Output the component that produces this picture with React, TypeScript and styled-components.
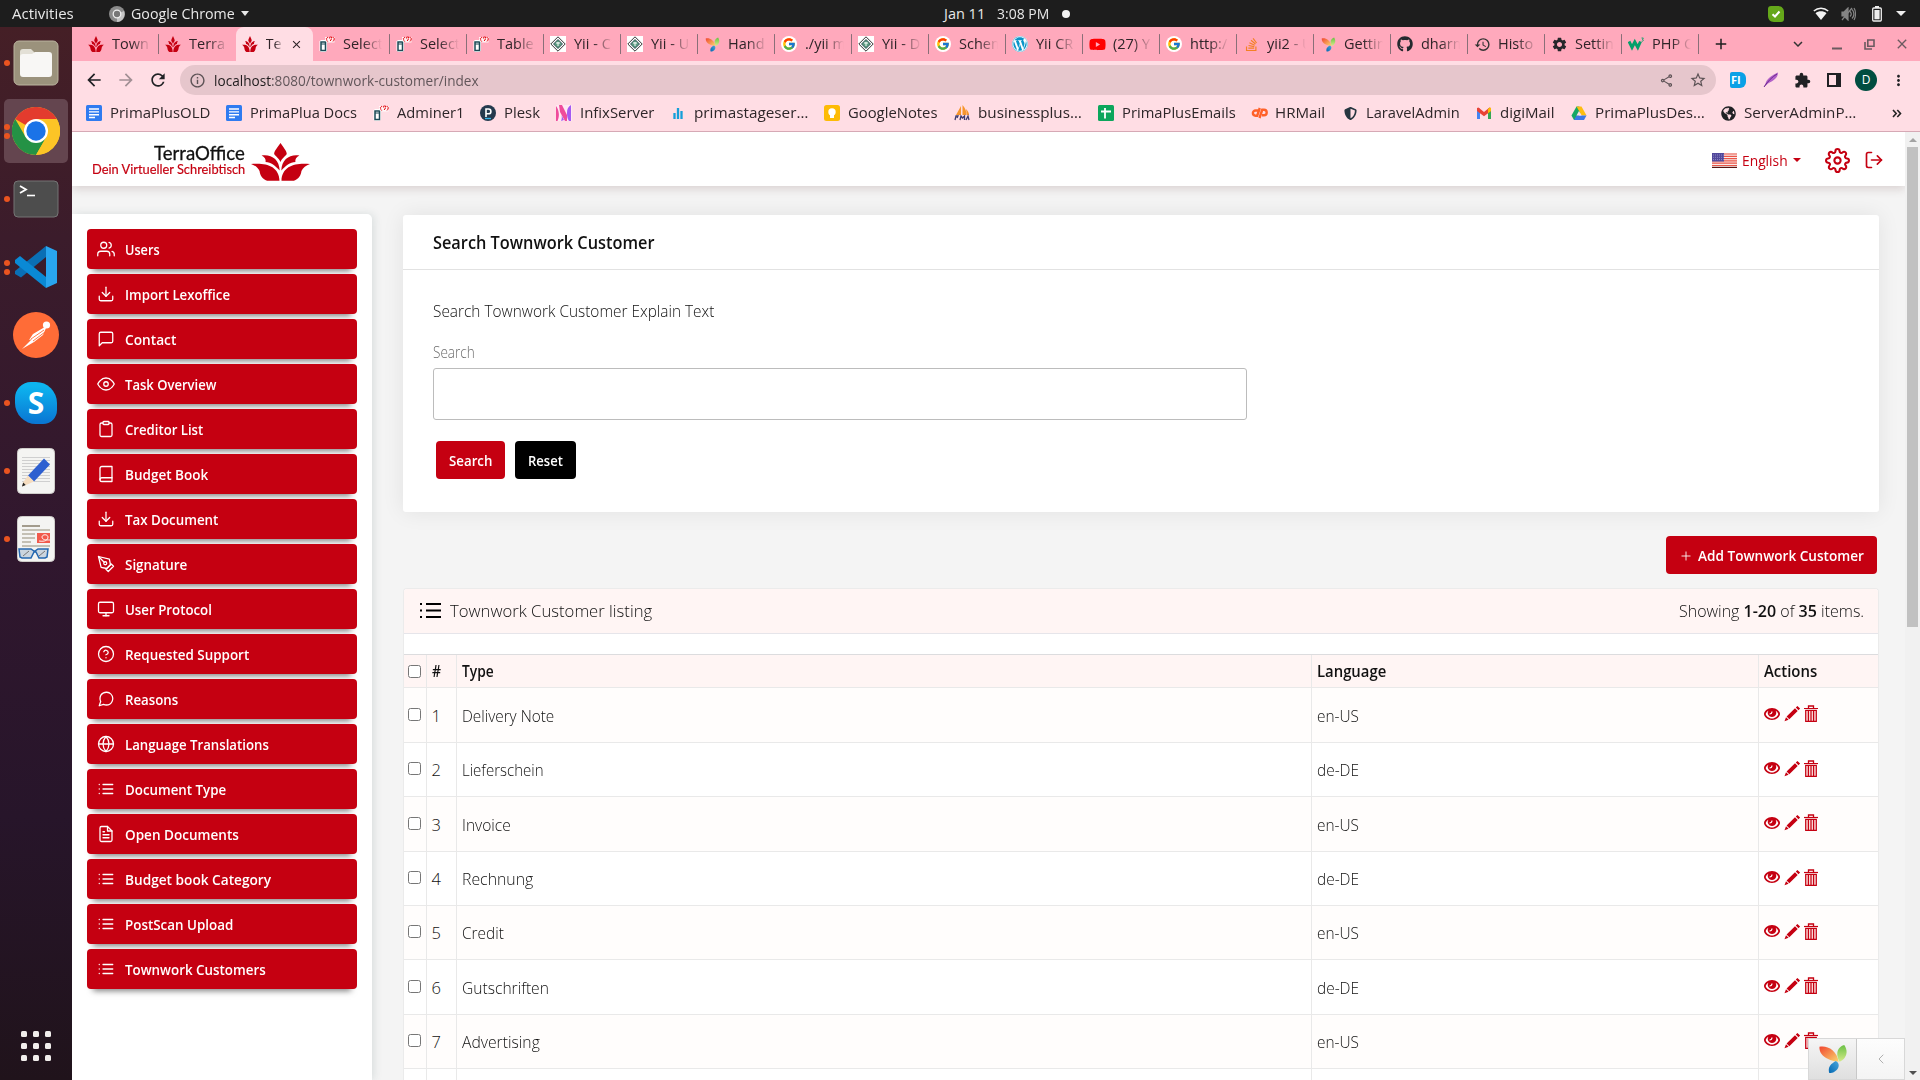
import React, { useLayoutEffect, useRef, useState } from "react";
import styled, { createGlobalStyle, css } from "styled-components";
import {
  FiUsers, FiDownload, FiMessageSquare, FiEye, FiClipboard, FiBook, FiPenTool, FiMonitor,
  FiHelpCircle, FiMessageCircle, FiGlobe, FiList, FiFileText, FiSettings, FiLogOut, FiPlus, FiChevronLeft,
} from "react-icons/fi";
import {
  MdArrowBack, MdArrowForward, MdRefresh, MdInfoOutline, MdOutlineShare, MdStarBorder, MdExtension,
  MdMoreVert, MdHistory, MdSettings, MdClose, MdAdd, MdExpandMore,
} from "react-icons/md";
import { FcGoogle } from "react-icons/fc";
import { FaYoutube, FaWordpress, FaGithub, FaStackOverflow, FaShieldAlt, FaGlobeAmericas } from "react-icons/fa";

const RED = "#c50011";

const GlobalStyle = createGlobalStyle`
  * { box-sizing: border-box; }
  html, body { margin: 0; padding: 0; overflow: hidden; }
  svg { display: block; flex: none; }
`;

const Desktop = styled.div`
  width: 1920px;
  height: 1080px;
  display: flex;
  flex-direction: column;
  overflow: hidden;
  font-family: "Open Sans", "Noto Sans", sans-serif;
  color: #111;
`;

/* ---------- text that is condensed to a given advance width ---------- */

const FitBox = styled.span`
  display: inline-block;
  white-space: pre;
  flex: none;
`;
const FitInner = styled.span`
  display: inline-block;
  transform-origin: 0 50%;
`;

function Fit({ w, children }: { w: number; children: React.ReactNode }) {
  const ref = useRef<HTMLSpanElement>(null);
  const [scale, setScale] = useState(1);
  useLayoutEffect(() => {
    const natural = ref.current?.offsetWidth ?? w;
    if (natural) setScale(w / natural);
  }, [w]);
  return (
    <FitBox style={{ width: w }}>
      <FitInner ref={ref} style={{ transform: `scaleX(${scale})` }}>{children}</FitInner>
    </FitBox>
  );
}

/* ---------- system bar ---------- */

const SystemBar = styled.header`
  height: 27px;
  flex: none;
  display: grid;
  grid-template-columns: 932px 1fr 164px;
  align-items: center;
  background: #1d1d1d;
  color: #e8e8e8;
  font-size: 14.5px;
  line-height: 26px;
`;
const BarLeft = styled.div`
  display: flex;
  align-items: center;
  padding-left: 12px;
`;
const AppMenu = styled.div`
  display: flex;
  align-items: center;
  gap: 6px;
  margin-left: 35px;
`;
const BarCenter = styled.div`
  display: flex;
  align-items: center;
  gap: 12px;
  padding-left: 12px;
`;
const NoticeDot = styled.i`
  width: 8px;
  height: 8px;
  border-radius: 50%;
  background: #f2f2f2;
  margin-left: 1px;
`;
const BarRight = styled.div`
  display: flex;
  align-items: center;
  padding-left: 12px;
`;
const Gap = styled.i<{ $w: number }>`
  width: ${(p) => p.$w}px;
  flex: none;
`;
const Triangle = styled.i<{ $s: number; $h?: number; $c: string; $up?: boolean }>`
  width: 0;
  height: 0;
  border-left: ${(p) => p.$s}px solid transparent;
  border-right: ${(p) => p.$s}px solid transparent;
  ${(p) => p.$up
    ? css`border-bottom: ${p.$h ?? p.$s}px solid ${p.$c};`
    : css`border-top: ${p.$h ?? p.$s}px solid ${p.$c};`}
`;

/* ---------- dock ---------- */

const Body = styled.div`
  flex: 1;
  display: flex;
  min-height: 0;
`;
const Dock = styled.nav`
  width: 72px;
  flex: none;
  display: flex;
  flex-direction: column;
  padding-top: 2px;
  background: linear-gradient(180deg, #451f26 0%, #3b1c2b 20%, #30172e 50%, #27152a 75%, #20131b 100%);
`;
const DockItem = styled.div`
  height: 68px;
  display: grid;
  grid-template-columns: 4px 64px;
  align-items: center;
`;
const DockMarks = styled.div`
  display: flex;
  flex-direction: column;
  gap: 3px;
  width: 6px;
  margin-left: 4px;
  z-index: 1;
`;
const Mark = styled.i`
  width: 6px;
  height: 6px;
  border-radius: 50%;
  background: #ea5420;
`;
const DockTile = styled.div<{ $active?: boolean }>`
  width: 64px;
  height: 64px;
  border-radius: 5px;
  display: flex;
  align-items: center;
  justify-content: center;
  background: ${(p) => (p.$active ? "#64454f" : "transparent")};
`;
const AppGrid = styled.div`
  margin: auto auto 19px;
  display: grid;
  grid-template-columns: repeat(3, 6px);
  gap: 6px;
`;
const GridDot = styled.i`
  width: 6px;
  height: 6px;
  border-radius: 1.5px;
  background: #f1eeec;
`;

const FilesIcon = () => (
  <svg width="46" height="46" viewBox="0 0 46 46">
    <rect x="1" y="1" width="44" height="44" rx="5" fill="#9b927c" stroke="#bbb49f" />
    <path d="M7 12a3 3 0 0 1 3-3h8l4 4-1 6H7z" fill="#e3e0d6" />
    <path d="M7 17a3 3 0 0 1 3-3h9l3-2h14a3 3 0 0 1 3 3v19a3 3 0 0 1-3 3H10a3 3 0 0 1-3-3z" fill="#f8f7f5" />
  </svg>
);
const ChromeIcon = ({ size = 48 }: { size?: number }) => (
  <svg width={size} height={size} viewBox="0 0 48 48">
    <circle cx="24" cy="24" r="24" fill="#fcc426" />
    <path d="M24 24 3.2 12A24 24 0 0 1 44.8 12z" fill="#e33b2e" />
    <path d="M3.2 12A24 24 0 0 0 24 48l10.4-18L13.6 30z" fill="#249245" />
    <path d="M24 12H44.8A24 24 0 0 1 24 48L34.4 30z" fill="#fcc426" />
    <circle cx="24" cy="24" r="12" fill="#fff" />
    <circle cx="24" cy="24" r="9.7" fill="#1a73e8" />
  </svg>
);
const TerminalIcon = () => (
  <svg width="46" height="38" viewBox="0 0 46 38">
    <rect x="1" y="1" width="44" height="36" rx="4" fill="#4d4d4d" stroke="#757575" />
    <path d="M7 6l6 3.5L7 13" fill="none" stroke="#fff" strokeWidth="1.8" />
    <path d="M14 15.5h8" stroke="#fff" strokeWidth="1.6" />
  </svg>
);
const CodeIcon = () => (
  <svg width="42" height="42" viewBox="0 0 42 42">
    <path d="M31 0v11L6 31.5 0 28v-3z" fill="#0a6fb5" />
    <path d="M5 10 0 14v3l31 25V31z" fill="#0a89d5" />
    <path d="M31 0 42 5v32l-11 5z" fill="#29a6f0" />
  </svg>
);
const PostmanIcon = () => (
  <svg width="46" height="46" viewBox="0 0 46 46">
    <circle cx="23" cy="23" r="23" fill="#ff6c37" />
    <circle cx="33.5" cy="13" r="3.6" fill="#fff" />
    <path d="M31 15.500 20 22l-4 6 3-1-10 10 12-7 9-7 3-7z" fill="#fff" />
    <path d="M18 27l13-9M20 29l12-9" stroke="#ff6c37" strokeWidth="0.9" />
  </svg>
);
const SkypeGlyph = styled.div`
  width: 42px;
  height: 42px;
  border-radius: 16px 21px 14px 21px;
  background: linear-gradient(180deg, #0db4ef 10%, #0a78d4 95%);
  color: #fff;
  font: 700 30px/41px "Open Sans", sans-serif;
  text-align: center;
`;
const EditorIcon = () => (
  <svg width="38" height="46" viewBox="0 0 38 46">
    <rect x="0.5" y="0.5" width="37" height="45" rx="4" fill="#f4f4f2" stroke="#cfcdca" />
    <path d="M5 9.500h28M5 12.500h28M5 15.500h28M5 18.500h28M5 21.500h28M5 24.500h28M5 27.500h28M5 30.500h28M5 33.500h28" stroke="#cfcfcf" />
    <path d="M27 10.500l6 6-16 17-6-6z" fill="#2d5fd0" />
    <path d="M11 27.500l6 6-9 4-3 1 1-4z" fill="#f5dcbf" />
    <path d="M5 38.500l1.200-4 2.500 2.500z" fill="#222" />
  </svg>
);
const ViewerIcon = () => (
  <svg width="38" height="46" viewBox="0 0 38 46">
    <rect x="0.5" y="0.5" width="37" height="45" rx="4" fill="#f4f4f2" stroke="#cfcdca" />
    <path d="M5 10h18" stroke="#a39c8d" strokeWidth="2" />
    <path d="M5 14h28M5 18h13M5 22h13M5 26h9M5 30h28" stroke="#c4c0b4" strokeWidth="2" />
    <rect x="20" y="17" width="13" height="10" fill="#f15a4c" />
    <path d="M22 25c6 1 9-1 9-4s-6-3-6 0 4 3 8 3" fill="none" stroke="#fff" strokeWidth="0.9" />
    <path d="M2 33h12l3 2h1l3-2h10l-1 8-2 1h-6l-3-6h-2l-3 6H5l-2-1z" fill="#cbd5df" stroke="#2467b0" strokeWidth="1.500" />
    <path d="M6 40l6-5M22 40l6-5" stroke="#777" />
  </svg>
);

/* ---------- browser ---------- */

const Browser = styled.div`
  flex: 1;
  min-width: 0;
  display: flex;
  flex-direction: column;
`;
const TabStrip = styled.div`
  height: 34px;
  flex: none;
  display: flex;
  background: #ffa9bc;
  padding-left: 9.5px;
  font-size: 14.5px;
  color: #2f2428;
`;
const Tab = styled.div<{ $active?: boolean; $line?: boolean }>`
  width: 77px;
  flex: none;
  display: flex;
  align-items: center;
  padding-left: 6.5px;
  gap: ${(p) => (p.$active ? 7.500 : 8)}px;
  border-radius: 8px 8px 0 0;
  background: ${(p) => (p.$active
    ? "#ffdde4"
    : p.$line ? "linear-gradient(#8a6f78, #8a6f78) right 0 top 7px / 1px 20px no-repeat" : "none")};
`;
const TabLabel = styled.span<{ $w: number }>`
  width: ${(p) => p.$w}px;
  flex: none;
  overflow: hidden;
  white-space: pre;
  line-height: 32px;
  mask-image: linear-gradient(90deg, #000 50%, transparent 100%);
`;
const Favicon = styled.span`
  width: 16px;
  height: 16px;
  flex: none;
  display: flex;
  align-items: center;
  justify-content: center;
`;
const RoundPatch = styled(Favicon)`
  border-radius: 50%;
  background: #fff;
`;
const WindowControls = styled.div`
  flex: 1;
  display: flex;
  align-items: center;
  justify-content: flex-end;
  color: #6b5a60;
  padding-right: 10px;
`;
const NewTab = styled.div`
  width: 44px;
  display: flex;
  align-items: center;
  justify-content: center;
  color: #1e1e1e;
`;
const ToolRow = styled.div`
  height: 38px;
  flex: none;
  display: flex;
  align-items: center;
  background: #ffdde4;
  color: #202124;
  padding-left: 12px;
`;
const Omnibox = styled.div`
  width: 1536px;
  height: 30px;
  margin-left: 12px;
  border-radius: 15px;
  background: #e6c6cc;
  display: flex;
  align-items: center;
  padding: 0 9px;
  color: #5c5255;
`;
const Url = styled.div`
  flex: 1;
  margin-left: 8px;
  font-size: 15px;
  line-height: 28px;
  color: #62565a;
  b { font-weight: 400; color: #1f1c1d; }
`;
const ToolIcons = styled.div`
  flex: 1;
  display: flex;
  align-items: center;
  padding-left: 14px;
`;
const ExtBadge = styled.span`
  width: 16px;
  height: 16px;
  background: #0aa0e6;
  border-radius: 2px 6px 6px 2px;
  color: #fff;
  font: 700 11px/16px "Open Sans", sans-serif;
  padding-left: 1px;
`;
const SidePanelIcon = styled.span`
  width: 14px;
  height: 14px;
  border: 2px solid #202124;
  border-right-width: 5px;
`;
const Avatar = styled.span`
  width: 22px;
  height: 22px;
  border-radius: 50%;
  background: #014d40;
  color: #fff;
  font-size: 12px;
  line-height: 22px;
  text-align: center;
`;
const Bookmarks = styled.div`
  height: 33px;
  flex: none;
  display: flex;
  align-items: center;
  padding: 0 0 4px 14px;
  background: #ffdde4;
  border-bottom: 1px solid #d6a9b5;
  font-size: 14.5px;
  line-height: 26px;
  color: #2e2629;
`;
const Bookmark = styled.div<{ $w: number }>`
  width: ${(p) => p.$w}px;
  flex: none;
  display: flex;
  align-items: center;
  gap: 8px;
`;

/* Shared leaf artwork of the TerraOffice brand */
const Leaf = ({ w, h }: { w: number; h: number }) => (
  <svg width={w} height={h} viewBox="0 0 58.6 38" preserveAspectRatio="none" fill={RED}>
    <path d="M29.3 0C32 4 35.500 8 35.500 11 34.500 13 31 15 29.300 19 27.500 15 24 13 23 11 23 8 26.600 4 29.300 0z" />
    <path d="M10.500 12.500C20 11 28 16 28.500 27.500 24 22.500 20 19.500 14.500 19 15 16 13.500 14 10.500 12.500z" />
    <path d="M48.100 12.500C38.600 11 30.600 16 30.100 27.500 34.600 22.500 38.600 19.500 44.100 19 43.600 16 45.100 14 48.100 12.500z" />
    <path d="M0 21C13 19.500 28 22 28.300 37.800H16C11 36 9 32 8.500 28 7 24.500 4 22.500 0 21z" />
    <path d="M58.600 21C45.600 19.500 30.600 22 30.300 37.800H42.600C47.600 36 49.600 32 50.100 28 51.600 24.500 54.600 22.500 58.600 21z" />
  </svg>
);
const AdminerIcon = () => (
  <svg width="16" height="16" viewBox="0 0 16 16" fill="none">
    <path d="M.5 5.500 2 4h4.500L8 5.500v9L6.500 16H2L.5 14.500z" fill="#fff" />
    <path d="M2 6v8.500h4.500V6z" stroke="#1d4b57" strokeWidth="1.500" />
    <path d="M2 8h4.500" stroke="#1d4b57" />
    <path d="M6 1h9.500v5.500H9L6 5z" fill="#fff" opacity="0.85" />
    <path d="M9 1 7 3.200 9 5.500M10.500 2.500V1h2v2l-1 .7V5M13.800 1l1.700 2.200-1.700 2.300" stroke="#e5121a" strokeWidth="1.100" strokeDasharray="1.200 0.500" />
  </svg>
);
const YiiForumIcon = () => (
  <svg width="16" height="16" viewBox="0 0 16 16">
    <rect width="16" height="16" fill="#fff" />
    <path d="M8 .8 15.200 8 8 15.200 .8 8z" fill="none" stroke="#333" />
    <path d="M8 3.500 12.500 8 8 12.500 3.500 8z" fill="#5a9b80" stroke="#234" strokeWidth="0.800" />
    <path d="M6 7h4M8 6v4" stroke="#fff" />
  </svg>
);
const YiiLogo = ({ size = 16 }: { size?: number }) => (
  <svg width={size} height={size} viewBox="0 0 32 32">
    <defs>
      <linearGradient id="yo" x1="0" y1="0" x2="1" y2="1"><stop offset="0" stopColor="#f1452f" /><stop offset="1" stopColor="#fbd870" /></linearGradient>
      <linearGradient id="yg" x1="0" y1="0" x2="0" y2="1"><stop offset="0" stopColor="#69c044" /><stop offset="1" stopColor="#d6eb8a" /></linearGradient>
      <linearGradient id="yb" x1="1" y1="0" x2="0" y2="1"><stop offset="0" stopColor="#4ba7dc" /><stop offset="1" stopColor="#0468b2" /></linearGradient>
    </defs>
    <path d="M1.500 3C9 1 20 6 22 19 13 18 1 14 1.500 3z" fill="url(#yo)" />
    <path d="M23 19C18 10 21 3 28 1 33 8 30 16 23 19z" fill="url(#yg)" />
    <path d="M19 18c7 4 1 13-7 13-2-7 2-10 7-13z" fill="url(#yb)" />
  </svg>
);
const DocsIcon = () => (
  <svg width="16" height="16" viewBox="0 0 16 16"><rect width="16" height="16" rx="1.500" fill="#2f7bf0" /><path d="M3 4h10M3 6.900h10M3 9.800h10M3 12.500h6" stroke="#fff" strokeWidth="1.400" /></svg>
);
const PleskIcon = () => (
  <svg width="16" height="16" viewBox="0 0 16 16"><circle cx="8" cy="8" r="8" fill="#25394d" /><path d="M6 12V4h2.500a2.400 2.400 0 0 1 0 4.800H6" fill="none" stroke="#fff" strokeWidth="1.600" /><path d="M5 13.500h6" stroke="#36b5e8" strokeWidth="1.300" /></svg>
);
const InfixIcon = () => (
  <svg width="16" height="16" viewBox="0 0 16 16"><rect width="16" height="16" fill="#ffe9f3" /><path d="M0 16V1c3 4 4 10 1.500 15zM3 0h3l5 10v6H9L4 7z" fill="#ef4b9b" /><path d="M5 16c1-2 1-4 .5-6L8 15zM11 8c0-4 1-6 4-8v16h-2c-1.500-2-2-5-2-8z" fill="#a45af2" /></svg>
);
const BarsIcon = () => (
  <svg width="14" height="16" viewBox="0 0 14 16"><path d="M3.500 8v6M7 3v11M10.500 6v8" stroke="#159fd8" strokeWidth="2.300" /></svg>
);
const KeepIcon = () => (
  <svg width="16" height="16" viewBox="0 0 16 16"><rect width="16" height="16" rx="2.500" fill="#fdbb05" /><circle cx="8" cy="7" r="3.700" fill="#fff" /><path d="M6 10h4v3H6z" fill="#fff" /></svg>
);
const PmaIcon = () => (
  <svg width="16" height="16" viewBox="0 0 16 16"><path d="M7 1v9H2zM8.500 0c3 3 4 7 4 10h-4zM12 4c2 2 3 4 3 6h-2z" fill="#f6952c" /><path d="M1 15l1-4h2l-1 2M6 15l1-4 1.500 2 2-2v4M12 15l2-4 1 4" fill="none" stroke="#3d3c70" strokeWidth="1.300" /></svg>
);
const SheetsIcon = () => (
  <svg width="16" height="16" viewBox="0 0 16 16"><rect width="16" height="16" rx="1.500" fill="#0ca65c" /><path d="M3 6.500h10M7 3v10.500" stroke="#fff" strokeWidth="1.800" /></svg>
);
const CpanelIcon = () => (
  <svg width="17" height="16" viewBox="0 0 17 16" fill="none" stroke="#ff6128" strokeWidth="2.400"><path d="M7 5.500H4.500a2.600 2.600 0 0 0 0 5.200H6.200L8.800 3" /><path d="M8.500 13l2.700-8.200h1.800a2.600 2.600 0 0 1 0 5.400H11" /></svg>
);
const GmailIcon = () => (
  <svg width="16" height="16" viewBox="0 0 16 16"><path d="M1 3.500h3V14H1z" fill="#4285f4" /><path d="M12 3.500h3V14h-3z" fill="#34a853" /><path d="M1 3v3l7 5.200L15 6V3l-1.500-.5L8 7 2.500 2.500z" fill="#ea4335" /><path d="M12 4l1.500-1.500L15 3v3l-3 2.200z" fill="#fbbc04" /></svg>
);
const DriveIcon = () => (
  <svg width="16" height="16" viewBox="0 0 16 16"><path d="M5.500 1.500h2.700L11 6l-6 9H3L.5 10.500z" fill="#16a765" /><path d="M5.500 1.500h5l5 9H10.700z" fill="#fdbd10" /><path d="M5.500 10.500h10L13 15H3z" fill="#3b78e7" /><path d="M8 6 5.500 10.500h5z" fill="#ffdde4" /></svg>
);
const FeatherIcon = () => (
  <svg width="18" height="18" viewBox="0 0 18 18"><path d="M2 16 4.500 10C8 5 13 3 16 1.500c0 5-4 8-10 11z" fill="#b260c9" /><path d="M2 16C6 10 10 6 15 3" stroke="#6c2a8b" fill="none" /></svg>
);

const google = <RoundPatch><FcGoogle size={14} /></RoundPatch>;
const leaf = <Leaf w={16} h={16} />;

type TabData = { icon: React.ReactNode; label: string; active?: boolean; line?: boolean };
const tabs: TabData[] = [
  { icon: leaf, label: "Town", line: true },
  { icon: leaf, label: "Terra" },
  { icon: leaf, label: "Te", active: true },
  { icon: <AdminerIcon />, label: "Select", line: true },
  { icon: <AdminerIcon />, label: "Select", line: true },
  { icon: <AdminerIcon />, label: "Table", line: true },
  { icon: <YiiForumIcon />, label: "Yii - C", line: true },
  { icon: <YiiForumIcon />, label: "Yii - U", line: true },
  { icon: <YiiLogo size={15} />, label: "Hand", line: true },
  { icon: google, label: "./yii m", line: true },
  { icon: <YiiForumIcon />, label: "Yii - D", line: true },
  { icon: google, label: "Schem", line: true },
  { icon: <RoundPatch><FaWordpress size={16} color="#0a94c8" /></RoundPatch>, label: "Yii CR", line: true },
  { icon: <FaYoutube size={17} color="#f00" />, label: "(27) Y", line: true },
  { icon: google, label: "http:/", line: true },
  { icon: <FaStackOverflow size={15} color="#f48024" />, label: "yii2 - U", line: true },
  { icon: <YiiLogo size={15} />, label: "Gettin", line: true },
  { icon: <FaGithub size={16} color="#24292e" />, label: "dharm", line: true },
  { icon: <MdHistory size={17} color="#333" />, label: "Histo", line: true },
  { icon: <MdSettings size={17} color="#26262a" />, label: "Settin", line: true },
  {
    icon: (
      <svg width="16" height="14" viewBox="0 0 16 14" fill="none" stroke="#04a06a">
        <path d="M1 4.500 4 10.500 6.800 5l3 5.500L12.500 4.500" strokeWidth="3" />
        <path d="M13.500 1h1.800l-.8 1.500c1.500 0 1 2-.8 1.700" strokeWidth="0.900" />
      </svg>
    ),
    label: "PHP C",
    line: true,
  },
];

const bookmarks: { icon: React.ReactNode; label: string; text: number; w: number }[] = [
  { icon: <DocsIcon />, label: "PrimaPlusOLD", text: 100, w: 140 },
  { icon: <DocsIcon />, label: "PrimaPlua Docs", text: 107, w: 147 },
  { icon: <AdminerIcon />, label: "Adminer1", text: 67, w: 107 },
  { icon: <PleskIcon />, label: "Plesk", text: 36, w: 76 },
  { icon: <InfixIcon />, label: "InfixServer", text: 74, w: 114 },
  { icon: <BarsIcon />, label: "primastageser…", text: 114, w: 154 },
  { icon: <KeepIcon />, label: "GoogleNotes", text: 90, w: 130 },
  { icon: <PmaIcon />, label: "businessplus…", text: 104, w: 144 },
  { icon: <SheetsIcon />, label: "PrimaPlusEmails", text: 114, w: 153 },
  { icon: <CpanelIcon />, label: "HRMail", text: 50, w: 91 },
  { icon: <FaShieldAlt size={13} color="#263640" />, label: "LaravelAdmin", text: 94, w: 134 },
  { icon: <GmailIcon />, label: "digiMail", text: 55, w: 95 },
  { icon: <DriveIcon />, label: "PrimaPlusDes…", text: 110, w: 149 },
  { icon: <FaGlobeAmericas size={15} color="#202124" />, label: "ServerAdminP…", text: 112, w: 172 },
];

/* ---------- page ---------- */

const Viewport = styled.div`
  flex: 1;
  min-height: 0;
  display: flex;
  background: #fff;
`;
const Page = styled.div`
  width: 1833px;
  flex: none;
  display: flex;
  flex-direction: column;
  background: #f4f4f4;
  overflow: hidden;
`;
const Scrollbar = styled.div`
  width: 15px;
  display: flex;
  flex-direction: column;
  align-items: center;
  background: #f1f1f1;
  padding: 6px 0 5px;
`;
const Thumb = styled.div`
  width: 11px;
  height: 480px;
  margin: 5px 0 auto;
  background: #c1c1c1;
`;
const PageHeader = styled.header`
  height: 54px;
  flex: none;
  display: flex;
  align-items: center;
  justify-content: space-between;
  background: #fff;
  padding: 0 21px 0 20px;
  box-shadow: 0 3px 9px rgba(110, 70, 70, 0.2);
  color: ${RED};
  z-index: 1;
`;
const Brand = styled.div`
  display: flex;
  align-items: center;
  gap: 6px;
  padding-top: 5px;
`;
const BrandText = styled.div`
  display: flex;
  flex-direction: column;
  align-items: flex-end;
  padding-bottom: 3px;
  font-family: Lato, sans-serif;
`;
const BrandName = styled.div`
  color: #111;
  font-size: 19px;
  line-height: 17px;
  -webkit-text-stroke: 0.3px #111;
`;
const BrandSlogan = styled.div`
  font-size: 14px;
  line-height: 14px;
  margin-top: 1px;
  -webkit-text-stroke: 0.2px ${RED};
`;
const HeaderTools = styled.div`
  display: flex;
  align-items: center;
  padding-top: 2px;
  font-size: 15px;
`;
const Content = styled.div`
  flex: 1;
  min-height: 0;
  display: flex;
`;
const Sidebar = styled.aside`
  width: 300px;
  flex: none;
  margin-top: 28px;
  padding: 15px;
  display: flex;
  flex-direction: column;
  gap: 5px;
  background: #fff;
  border-radius: 0 5px 0 0;
  box-shadow: 2px 0 8px rgba(40, 80, 80, 0.13);
`;
const MenuItem = styled.a`
  height: 40px;
  flex: none;
  display: flex;
  align-items: center;
  padding-left: 10px;
  gap: 10px;
  border-radius: 4px;
  background: ${RED};
  color: #fff;
  font-size: 14.5px;
  font-weight: 600;
  line-height: 38px;
  box-shadow: 0 8px 6px -6px rgba(0, 0, 0, 0.5);
  span { padding-top: 1px; }
`;
const Main = styled.main`
  width: 1476px;
  margin-left: 31px;
  padding-top: 29px;
  display: flex;
  flex-direction: column;
`;
const Card = styled.section`
  height: 297px;
  flex: none;
  background: #fff;
  border-radius: 3px;
  box-shadow: 0 0 22px rgba(0, 0, 0, 0.08);
`;
const CardHead = styled.div`
  height: 55px;
  border-bottom: 1px solid #e2e2e2;
  padding-left: 30px;
  font-size: 17.5px;
  font-weight: 600;
  line-height: 54px;
`;
const Form = styled.div`
  padding: 24px 30px;
  display: flex;
  flex-direction: column;
`;
const Explain = styled.div`
  font-size: 16.5px;
  font-weight: 350;
  line-height: 34px;
`;
const Label = styled.label`
  margin-top: 9px;
  font-size: 15.5px;
  font-weight: 350;
  line-height: 30px;
  color: #6c6c6c;
`;
const Input = styled.input`
  width: 814px;
  height: 52px;
  margin-top: 1px;
  border: 1px solid #bcbcbc;
  border-radius: 3px;
  background: #fff;
`;
const Buttons = styled.div`
  display: flex;
  gap: 10px;
  margin: 21px 0 0 3px;
`;
const Button = styled.button<{ $dark?: boolean }>`
  height: 38px;
  border: 0;
  padding: 1px 13px 0;
  display: flex;
  align-items: center;
  gap: 5px;
  border-radius: 4px;
  background: ${(p) => (p.$dark ? "#000" : RED)};
  color: #fff;
  font: 600 14.5px/38px "Open Sans", sans-serif;
`;
const AddRow = styled.div`
  display: flex;
  justify-content: flex-end;
  padding: 24px 2px 14px 0;
`;
const Listing = styled.section`
  flex: 1;
  min-height: 0;
  overflow: hidden;
  border: 1px solid #ebebeb;
  border-bottom: 0;
  border-radius: 4px 4px 0 0;
  background: #fff;
`;
const ListHead = styled.div`
  height: 45px;
  display: flex;
  align-items: center;
  justify-content: space-between;
  background: #fff5f4;
  border-bottom: 1px solid #e6e5ea;
  padding: 0 14px 2px 16px;
  font-size: 16.5px;
  font-weight: 350;
  b { font-weight: 600; }
`;
const ListTitle = styled.div`
  display: flex;
  align-items: center;
  gap: 9px;
  padding-top: 1px;
`;
const Row = styled.div<{ $head?: boolean; $odd?: boolean; $h: number }>`
  height: ${(p) => p.$h}px;
  display: grid;
  grid-template-columns: 23px 30px 855px 447px 1fr;
  background: ${(p) => (p.$head ? "#fff5f4" : p.$odd ? "#fffdfc" : "#fff")};
  border-bottom: 1px solid #e9e9e9;
  font-size: ${(p) => (p.$head ? 15.5 : 16.5)}px;
  font-weight: ${(p) => (p.$head ? 600 : 350)};
  ${(p) => p.$head && css`
    margin-top: 20px;
    border-top: 1px solid #dcdcde;
  `}
`;
const Cell = styled.div<{ $check?: boolean }>`
  display: flex;
  align-items: center;
  padding-left: ${(p) => (p.$check ? 4 : 4.5)}px;
  &:not(:last-child) { border-right: 1px solid #e9e9e9; }
`;
const Check = styled.input<{ $up?: boolean }>`
  width: 13px;
  height: 13px;
  margin: 0 0 ${(p) => (p.$up ? 2 : 0)}px;
`;
const Actions = styled.div`
  display: flex;
  align-items: center;
  gap: 3.5px;
  margin: 0 0 3px 0.5px;
`;
const YiiBar = styled.div`
  position: absolute;
  right: 15px;
  bottom: 0;
  width: 97px;
  height: 42px;
  display: flex;
  border: 1px solid #d8d8d8;
  z-index: 3;
`;
const YiiPane = styled.div<{ $logo?: boolean }>`
  flex: 1;
  display: flex;
  align-items: center;
  justify-content: center;
  color: #b0b0b0;
  background: ${(p) => (p.$logo ? "linear-gradient(#f5f5f5, #dfdfdf)" : "linear-gradient(#fdfdfd, #f4f4f4)")};
  ${(p) => p.$logo && css`border-right: 1px solid #c8c8c8;`}
`;

const FlagIcon = () => (
  <svg width="25" height="15" viewBox="0 0 25 15">
    <rect width="25" height="15" fill="#f9ebe9" />
    <path d="M0 1h25M0 3.300h25M0 5.600h25M0 7.900h25M0 10.200h25M0 12.500h25" stroke="#ea5547" strokeWidth="1.200" />
    <path d="M0 14.400h25" stroke="#5a1512" strokeWidth="1.200" />
    <rect width="12" height="8.500" fill="#51489b" />
    <path d="M1 2h11M1 4.300h11M1 6.600h11" stroke="#8e88c4" strokeDasharray="1 1" />
  </svg>
);
const ViewIcon = () => (
  <svg width="16" height="14" viewBox="0 0 16 14">
    <path d="M8 1C3.500 1 0 4.500 0 7s3.500 6 8 6 8-3.500 8-6-3.500-6-8-6zm0 10.500C4.700 11.500 2 9 1.700 7 2 6 3 4.600 4.300 3.700A4.200 4.200 0 0 0 8 10a4.200 4.200 0 0 0 3.700-6.300C13 4.600 14 6 14.300 7 14 9 11.300 11.500 8 11.500z" fill={RED} />
    <path d="M8 4.500C8 6.500 7 7 5.500 7" fill="none" stroke="#fff" strokeWidth="1.100" />
  </svg>
);
const PencilIcon = () => (
  <svg width="17" height="17" viewBox="0 0 17 17" fill={RED}>
    <path d="M11 3.300 13.700 6 5.300 14.300 2.600 11.600zM2 12.300l2.600 2.500L.5 16.200zM11.800 2.600l1.600-1.600 2.700 2.600-1.600 1.700z" />
  </svg>
);
const TrashIcon = () => (
  <svg width="14" height="17" viewBox="0 0 14 17">
    <path d="M4.500 3V1h5v2" fill="none" stroke={RED} strokeWidth="1.300" />
    <path d="M0 3.500h14" stroke={RED} strokeWidth="1.200" />
    <path d="M1.200 5h11.600" stroke={RED} strokeWidth="1" opacity="0.4" />
    <path d="M1.700 5.500h10.600V16.300H1.700zM4.400 5.500V16M7 5.500V16M9.600 5.500V16" fill="#f9d5d5" stroke={RED} strokeWidth="1.200" />
  </svg>
);

const menu: [React.ComponentType<{ size?: number; strokeWidth?: number }>, string, number][] = [
  [FiUsers, "Users", 35],
  [FiDownload, "Import Lexoffice", 105],
  [FiMessageSquare, "Contact", 51],
  [FiEye, "Task Overview", 91],
  [FiClipboard, "Creditor List", 78],
  [FiBook, "Budget Book", 83],
  [FiDownload, "Tax Document", 93],
  [FiPenTool, "Signature", 62],
  [FiMonitor, "User Protocol", 87],
  [FiHelpCircle, "Requested Support", 124],
  [FiMessageCircle, "Reasons", 53],
  [FiGlobe, "Language Translations", 144],
  [FiList, "Document Type", 101],
  [FiFileText, "Open Documents", 114],
  [FiList, "Budget book Category", 146],
  [FiList, "PostScan Upload", 108],
  [FiList, "Townwork Customers", 141],
];

const rows: [string, number, string, number][] = [
  ["Delivery Note", 92, "en-US", 55],
  ["Lieferschein", 82, "de-DE", 54],
  ["Invoice", 49, "en-US", 55],
  ["Rechnung", 71, "de-DE", 54],
  ["Credit", 42, "en-US", 54],
  ["Gutschriften", 87, "de-DE", 55],
  ["Advertising", 78, "en-US", 54],
];

const dock: { icon: React.ReactNode; marks: number; active?: boolean }[] = [
  { icon: <FilesIcon />, marks: 1 },
  { icon: <ChromeIcon />, marks: 2, active: true },
  { icon: <TerminalIcon />, marks: 1 },
  { icon: <CodeIcon />, marks: 2 },
  { icon: <PostmanIcon />, marks: 0 },
  { icon: <SkypeGlyph>S</SkypeGlyph>, marks: 1 },
  { icon: <EditorIcon />, marks: 1 },
  { icon: <ViewerIcon />, marks: 1 },
];

export default function App() {
  return (
    <Desktop>
      <GlobalStyle />
      <SystemBar>
        <BarLeft>
          <Fit w={62}>Activities</Fit>
          <AppMenu>
            <svg width="16" height="16" viewBox="0 0 16 16">
              <circle cx="8" cy="8" r="8" fill="#8b8b8b" />
              <path d="M8 8 15 5a8 8 0 0 1-7 11z" fill="#c4c4c4" />
              <circle cx="8" cy="8" r="3.800" fill="#777" stroke="#eee" strokeWidth="1.300" />
            </svg>
            <Fit w={104}>Google Chrome</Fit>
            <Triangle $s={4.5} $h={5} $c="#e8e8e8" />
          </AppMenu>
        </BarLeft>
        <BarCenter>
          <Fit w={41}>Jan 11</Fit>
          <Fit w={52}>3:08 PM</Fit>
          <NoticeDot />
        </BarCenter>
        <BarRight>
          <svg width="16" height="16" viewBox="0 0 16 16"><path d="M3 0h7c4 0 6 3 6 6v7c0 2-1 3-3 3H6c-4 0-6-3-6-6V3c0-2 1-3 3-3z" fill="#65a81a" /><path d="M4.500 8.200 7 10.500l4.500-5" fill="none" stroke="#fff" strokeWidth="2" /></svg>
          <Gap $w={29} />
          <svg width="16" height="13" viewBox="0 0 16 13"><path d="M.8 4C5 .3 11 .3 15.200 4" fill="none" stroke="#f2f2f2" strokeWidth="1.500" /><path d="M2.500 6.200c3-2.500 8-2.500 11 0L8 13z" fill="#f2f2f2" /></svg>
          <Gap $w={12} />
          <svg width="15" height="14" viewBox="0 0 15 14" fill="none" stroke="#858585" strokeWidth="1.200"><path d="M1 5h2l4-4v12L3 9H1z" fill="#858585" /><path d="M9 4.500c1.500 1.500 1.500 3.500 0 5M11 2.500c2.500 2.500 2.500 6.500 0 9M13 1c2 3 2 9 0 12M1 13 11 1" /></svg>
          <Gap $w={16} />
          <svg width="10" height="16" viewBox="0 0 10 16"><path d="M3 1h4" stroke="#eee" strokeWidth="2" /><rect x=".7" y="2" width="8.600" height="13" rx="1" fill="none" stroke="#eee" strokeWidth="1.300" /><rect x="2.400" y="4" width="5.200" height="9.300" fill="#eee" /></svg>
          <Gap $w={14} />
          <Triangle $s={5} $h={5} $c="#eee" />
        </BarRight>
      </SystemBar>
      <Body>
        <Dock>
          {dock.map((d, i) => (
            <DockItem key={i}>
              <DockMarks>{Array.from({ length: d.marks }, (_, k) => <Mark key={k} />)}</DockMarks>
              <DockTile $active={d.active}>{d.icon}</DockTile>
            </DockItem>
          ))}
          <AppGrid>{Array.from({ length: 9 }, (_, k) => <GridDot key={k} />)}</AppGrid>
        </Dock>
        <Browser>
          <TabStrip>
            {tabs.map((t, i) => (
              <Tab key={i} $active={t.active} $line={t.line}>
                <Favicon>{t.icon}</Favicon>
                <TabLabel $w={t.active ? 17 : 39}>{t.label}</TabLabel>
                {t.active && <MdClose size={13} />}
              </Tab>
            ))}
            <NewTab><MdAdd size={18} /></NewTab>
            <WindowControls>
              <MdExpandMore size={18} color="#333" />
              <Gap $w={24} />
              <svg width="12" height="12" viewBox="0 0 12 12"><path d="M1 10.500h10" stroke="#6b5a60" strokeWidth="2" /></svg>
              <Gap $w={21} />
              <svg width="11" height="11" viewBox="0 0 11 11" fill="none" stroke="#6b5a60" strokeWidth="1.600"><path d="M3.800 1h6.200v6.200H3.800zM1 3v7h7" /></svg>
              <Gap $w={19} />
              <MdClose size={16} />
            </WindowControls>
          </TabStrip>
          <ToolRow>
            <MdArrowBack size={20} />
            <Gap $w={12} />
            <MdArrowForward size={20} color="#a28f94" />
            <Gap $w={12} />
            <MdRefresh size={20} />
            <Omnibox>
              <MdInfoOutline size={17} />
              <Url><Fit w={265}><b>localhost</b>:8080/townwork-customer/index</Fit></Url>
              <MdOutlineShare size={15} />
              <Gap $w={15} />
              <MdStarBorder size={18} />
            </Omnibox>
            <ToolIcons>
              <ExtBadge>FI</ExtBadge>
              <Gap $w={16} />
              <FeatherIcon />
              <Gap $w={14} />
              <MdExtension size={17} />
              <Gap $w={16} />
              <SidePanelIcon />
              <Gap $w={14} />
              <Avatar>D</Avatar>
              <Gap $w={13} />
              <MdMoreVert size={17} />
            </ToolIcons>
          </ToolRow>
          <Bookmarks>
            {bookmarks.map((b) => (
              <Bookmark key={b.label} $w={b.w}>
                <Favicon>{b.icon}</Favicon>
                <Fit w={b.text}>{b.label}</Fit>
              </Bookmark>
            ))}
            <svg width="10" height="9" viewBox="0 0 10 9" fill="none" stroke="#222" strokeWidth="1.600"><path d="M1 1l3.200 3.500L1 8M5.300 1l3.200 3.500L5.300 8" /></svg>
          </Bookmarks>
          <Viewport>
            <Page>
              <PageHeader>
                <Brand>
                  <BrandText>
                    <BrandName><Fit w={91}>TerraOffice</Fit></BrandName>
                    <BrandSlogan><Fit w={153}>Dein Virtueller Schreibtisch</Fit></BrandSlogan>
                  </BrandText>
                  <Leaf w={59} h={38} />
                </Brand>
                <HeaderTools>
                  <FlagIcon />
                  <Gap $w={5} />
                  <Fit w={46}>English</Fit>
                  <Gap $w={5} />
                  <Triangle $s={4} $c={RED} />
                  <Gap $w={24} />
                  <FiSettings size={25} />
                  <Gap $w={14} />
                  <FiLogOut size={20} />
                </HeaderTools>
              </PageHeader>
              <Content>
                <Sidebar>
                  {menu.map(([Icon, label, w]) => (
                    <MenuItem key={label}>
                      <Icon size={18} strokeWidth={1.7} />
                      <Fit w={w}>{label}</Fit>
                    </MenuItem>
                  ))}
                </Sidebar>
                <Main>
                  <Card>
                    <CardHead><Fit w={221}>Search Townwork Customer</Fit></CardHead>
                    <Form>
                      <Explain><Fit w={281}>Search Townwork Customer Explain Text</Fit></Explain>
                      <Label><Fit w={42}>Search</Fit></Label>
                      <Input />
                      <Buttons>
                        <Button><Fit w={43}>Search</Fit></Button>
                        <Button $dark><Fit w={35}>Reset</Fit></Button>
                      </Buttons>
                    </Form>
                  </Card>
                  <AddRow>
                    <Button><FiPlus size={14} strokeWidth={1.5} /><Fit w={166}>Add Townwork Customer</Fit></Button>
                  </AddRow>
                  <Listing>
                    <ListHead>
                      <ListTitle>
                        <svg width="21" height="15" viewBox="0 0 21 15" stroke="#000" strokeWidth="2"><path d="M6 1h15M6 7.500h15M6 14h15M0 1h2M0 7.500h2M0 14h2" /></svg>
                        <Fit w={202}>Townwork Customer listing</Fit>
                      </ListTitle>
                      <Fit w={185}>Showing <b>1-20</b> of <b>35</b> items.</Fit>
                    </ListHead>
                    <Row $head $h={34}>
                      <Cell $check><Check type="checkbox" /></Cell>
                      <Cell><Fit w={9}>#</Fit></Cell>
                      <Cell><Fit w={32}>Type</Fit></Cell>
                      <Cell><Fit w={69}>Language</Fit></Cell>
                      <Cell><Fit w={53}>Actions</Fit></Cell>
                    </Row>
                    {[...rows, ["", 0, "", 55] as [string, number, string, number]].map(([type, w, lang, h], i) => (
                      <Row key={i} $odd={i % 2 === 0} $h={h}>
                        <Cell $check>{type && <Check type="checkbox" $up />}</Cell>
                        <Cell>{type && <Fit w={9}>{i + 1}</Fit>}</Cell>
                        <Cell>{type && <Fit w={w}>{type}</Fit>}</Cell>
                        <Cell>{type && <Fit w={42}>{lang}</Fit>}</Cell>
                        <Cell>{type && <Actions><ViewIcon /><PencilIcon /><TrashIcon /></Actions>}</Cell>
                      </Row>
                    ))}
                  </Listing>
                </Main>
              </Content>
            </Page>
            <Scrollbar>
              <Triangle $s={4} $c="#a3a3a3" $up />
              <Thumb />
              <Triangle $s={4} $c="#505050" />
            </Scrollbar>
          </Viewport>
        </Browser>
      </Body>
      <YiiBar>
        <YiiPane $logo><YiiLogo size={30} /></YiiPane>
        <YiiPane><FiChevronLeft size={16} strokeWidth={1.5} /></YiiPane>
      </YiiBar>
    </Desktop>
  );
}
